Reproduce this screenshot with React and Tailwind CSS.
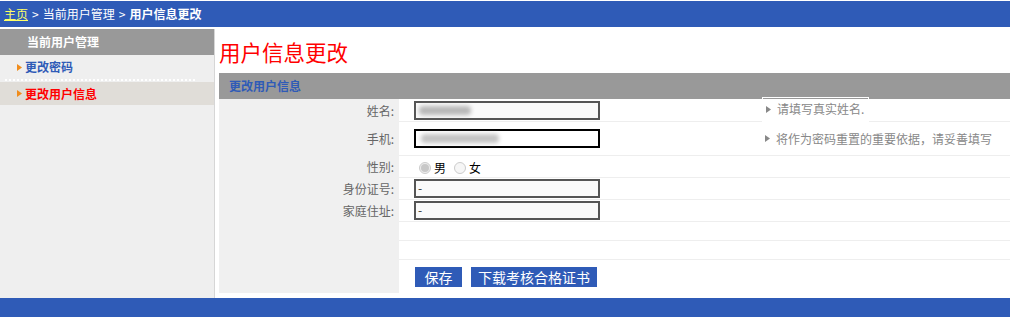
export default function App() {
  const font = { fontFamily: '"Noto Sans CJK SC", "Noto Sans", sans-serif' };
  const Tri = ({ c }) => (
    <svg width="5" height="7" viewBox="0 0 5 7" className="shrink-0">
      <path d="M0 0 L5 3.5 L0 7 Z" fill={c} />
    </svg>
  );
  const Label = ({ children }) => (
    <div className="w-[180px] shrink-0 bg-[#f0f0f0] flex items-center justify-end pr-[5px] text-[12px] text-[#666]">
      {children}
    </div>
  );
  const Hint = ({ children, boxed }) => (
    <div
      className={
        "flex items-center gap-[6px] text-[12px] text-[#888] pl-[3px] " +
        (boxed ? "border border-white -mt-[2px] h-[25px] pr-[4px]" : "")
      }
    >
      <Tri c="#888" />
      <span>{children}</span>
    </div>
  );
  return (
    <div className="w-[1010px] h-[317px] bg-white overflow-hidden flex flex-col" style={font}>
      <div className="h-[1px] bg-white" />
      <div className="h-[26px] bg-[#2f5bb7] flex items-center pl-[4px] text-[12px] text-white gap-[4px]">
        <span className="text-[#ffff66] underline">主页</span>
        <span>&gt;</span>
        <span>当前用户管理</span>
        <span>&gt;</span>
        <span className="font-bold">用户信息更改</span>
      </div>
      <div className="flex flex-1 pt-[2px]">
        <div className="w-[215px] shrink-0 bg-[#efefef] border-r border-[#d6d6d6] flex flex-col">
          <div className="h-[26px] bg-[#999] flex items-center pl-[27px] text-[12px] font-bold text-white">
            当前用户管理
          </div>
          <div className="h-[24px] flex items-center pl-[17px] gap-[3px] text-[12px] font-bold text-[#2f5bb7]">
            <Tri c="#f08c1c" />
            <span>更改密码</span>
          </div>
          <div className="ml-[5px] w-[190px] border-b-2 border-dotted border-white" />
          <div className="h-[1px]" />
          <div className="h-[23px] bg-[#e0ddd8] flex items-center pl-[17px] gap-[3px] text-[12px] font-bold text-[#ff0000]">
            <Tri c="#f08c1c" />
            <span>更改用户信息</span>
          </div>
        </div>
        <div className="flex-1 pl-[4px] flex flex-col">
          <div className="h-[44px] flex items-center text-[21.5px] text-[#ff0000] pt-[3px]">用户信息更改</div>
          <div className="h-[26px] bg-[#999] flex items-center pl-[10px] text-[12px] font-bold text-[#2f5bb7]">
            更改用户信息
          </div>
          <div className="flex flex-col">
            <div className="flex h-[23px]">
              <Label>姓名:</Label>
              <div className="flex-1 flex items-center border-b border-[#eee]">
                <div className="w-[363px] flex items-center">
                  <div className="ml-[15px] w-[186px] h-[19px] border-2 border-[#555] bg-[#fafafa] flex items-center pl-[3px]">
                    <div className="w-[52px] h-[9px] bg-[#b8b8b8] blur-[2px] rounded" />
                  </div>
                </div>
                <Hint boxed>请填写真实姓名.</Hint>
              </div>
            </div>
            <div className="flex h-[34px]">
              <Label>手机:</Label>
              <div className="flex-1 flex items-center border-b border-[#eee]">
                <div className="w-[363px] flex items-center">
                  <div className="ml-[15px] w-[186px] h-[19px] border-2 border-black bg-white flex items-center pl-[5px]">
                    <div className="w-[78px] h-[9px] bg-[#c4c4c4] blur-[2px] rounded" />
                  </div>
                </div>
                <Hint>将作为密码重置的重要依据，请妥善填写</Hint>
              </div>
            </div>
            <div className="flex h-[22px]">
              <Label>性别:</Label>
              <div className="flex-1 flex items-center border-b border-[#eee] pl-[20px] pt-[3px] text-[12px] text-black">
                <span className="w-[12px] h-[12px] rounded-full border border-[#ccc] bg-[#eee] flex items-center justify-center">
                  <span className="w-[8px] h-[8px] rounded-full bg-[#c8c8c8]" />
                </span>
                <span className="ml-[3px]">男</span>
                <span className="ml-[8px] w-[12px] h-[12px] rounded-full border border-[#ccc] bg-[#f6f6f6]" />
                <span className="ml-[3px]">女</span>
              </div>
            </div>
            <div className="flex h-[22px]">
              <Label>身份证号:</Label>
              <div className="flex-1 flex items-center border-b border-[#eee]">
                <div className="ml-[15px] w-[186px] h-[19px] border-2 border-[#555] bg-[#fafafa] text-[12px] leading-[14px] pl-[2px] text-[#333]">-</div>
              </div>
            </div>
            <div className="flex h-[22px]">
              <Label>家庭住址:</Label>
              <div className="flex-1 flex items-center border-b border-[#eee]">
                <div className="ml-[15px] w-[186px] h-[19px] border-2 border-[#555] bg-[#fafafa] text-[12px] leading-[14px] pl-[2px] text-[#333]">-</div>
              </div>
            </div>
            <div className="flex h-[19px]">
              <Label />
              <div className="flex-1 border-b border-[#eee]" />
            </div>
            <div className="flex h-[19px]">
              <Label />
              <div className="flex-1 border-b border-[#eee]" />
            </div>
            <div className="flex h-[33px]">
              <Label />
              <div className="flex-1 flex items-start pt-[7px] pl-[16px] gap-[9px]">
                <div className="h-[20px] w-[47px] flex items-center justify-center bg-[#2f5bb7] text-white text-[14px] leading-[20px]">保存</div>
                <div className="h-[20px] w-[126px] flex items-center justify-center bg-[#2f5bb7] text-white text-[14px] leading-[20px]">下载考核合格证书</div>
              </div>
            </div>
          </div>
        </div>
      </div>
      <div className="h-[19px] bg-[#2f5bb7]" />
    </div>
  );
}
